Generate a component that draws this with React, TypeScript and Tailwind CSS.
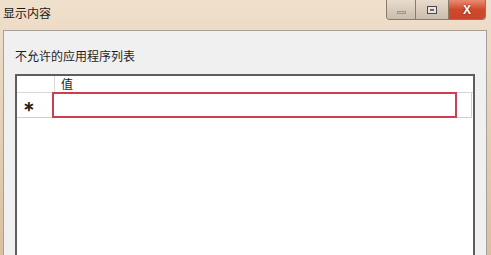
import React from "react";

export default function App() {
  return (
    <div
      className="relative w-[491px] h-[255px] overflow-hidden flex flex-col bg-gradient-to-b from-[#efe0cc] to-[#d9c0a0]"
      style={{ fontFamily: '"Noto Sans CJK SC", "Noto Sans", sans-serif' }}
    >
      {/* Title bar */}
      <div className="h-[30px] shrink-0 flex items-start">
        <div className="pl-[3px] pt-[5px] text-[12px] leading-[16px] text-[#1a1a1a]">显示内容</div>
        <div className="ml-auto mr-[5px] flex h-[20px] rounded-b-[4px] border border-t-0 border-[#8a7a6a] overflow-hidden">
          <div className="w-[29px] h-full flex items-end justify-center pb-[5px] bg-gradient-to-b from-[#e8dccd] to-[#cbbcab] border-r border-[#8a7a6a]">
            <div className="w-[9px] h-[3px] bg-[#c7c2bc] border border-[#9d958c]" />
          </div>
          <div className="w-[33px] h-full flex items-center justify-center bg-gradient-to-b from-[#e8dccd] to-[#cbbcab] border-r border-[#8a7a6a]">
            <div className="w-[10px] h-[8px] border border-[#4a4a4a] bg-[#e9e4de] flex items-center justify-center">
              <div className="w-[4px] h-[2px] border border-[#6a6a6a]" />
            </div>
          </div>
          <div className="w-[36px] h-full flex items-center justify-center bg-gradient-to-b from-[#e98c70] via-[#cf4a2c] to-[#c8452c]">
            <span className="text-white text-[12px] font-bold leading-none" style={{ fontFamily: '"Liberation Sans", sans-serif', textShadow: "0 0 2px #5a1a10" }}>X</span>
          </div>
        </div>
      </div>
      {/* Body */}
      <div className="flex-1 flex pl-[3px] pr-[4px]">
        <div className="flex-1 bg-[#f0f0f0] border-l border-t border-r border-[#a5a09a] flex flex-col pl-[11px] pr-[11px]">
          <div className="pt-[17px] h-[43px] shrink-0 text-[12px] leading-[16px] text-[#1e1e1e]">不允许的应用程序列表</div>
          <div className="flex-1 bg-white border-l-2 border-t-2 border-r-2 border-[#5e5e5e] flex flex-col">
            {/* header */}
            <div className="h-[17px] flex border-b border-[#d8d8d8]">
              <div className="w-[38px] border-r border-[#d8d8d8]" />
              <div className="pl-[6px] text-[12px] leading-[16px] text-[#1e1e1e]">值</div>
            </div>
            {/* row */}
            <div className="h-[25px] flex border-b border-[#cfcfcf] mr-[1px]">
              <div className="w-[38px] flex items-center pl-[6px] text-[14px] font-bold text-[#222]">∗</div>
              <div className="w-[405px] -ml-[3px] -mt-[1px] h-[26px] border-2 border-[#cf3e4e]" />
              <div className="flex-1 border-r border-[#cfcfcf]" />
            </div>
          </div>
        </div>
      </div>
    </div>
  );
}
